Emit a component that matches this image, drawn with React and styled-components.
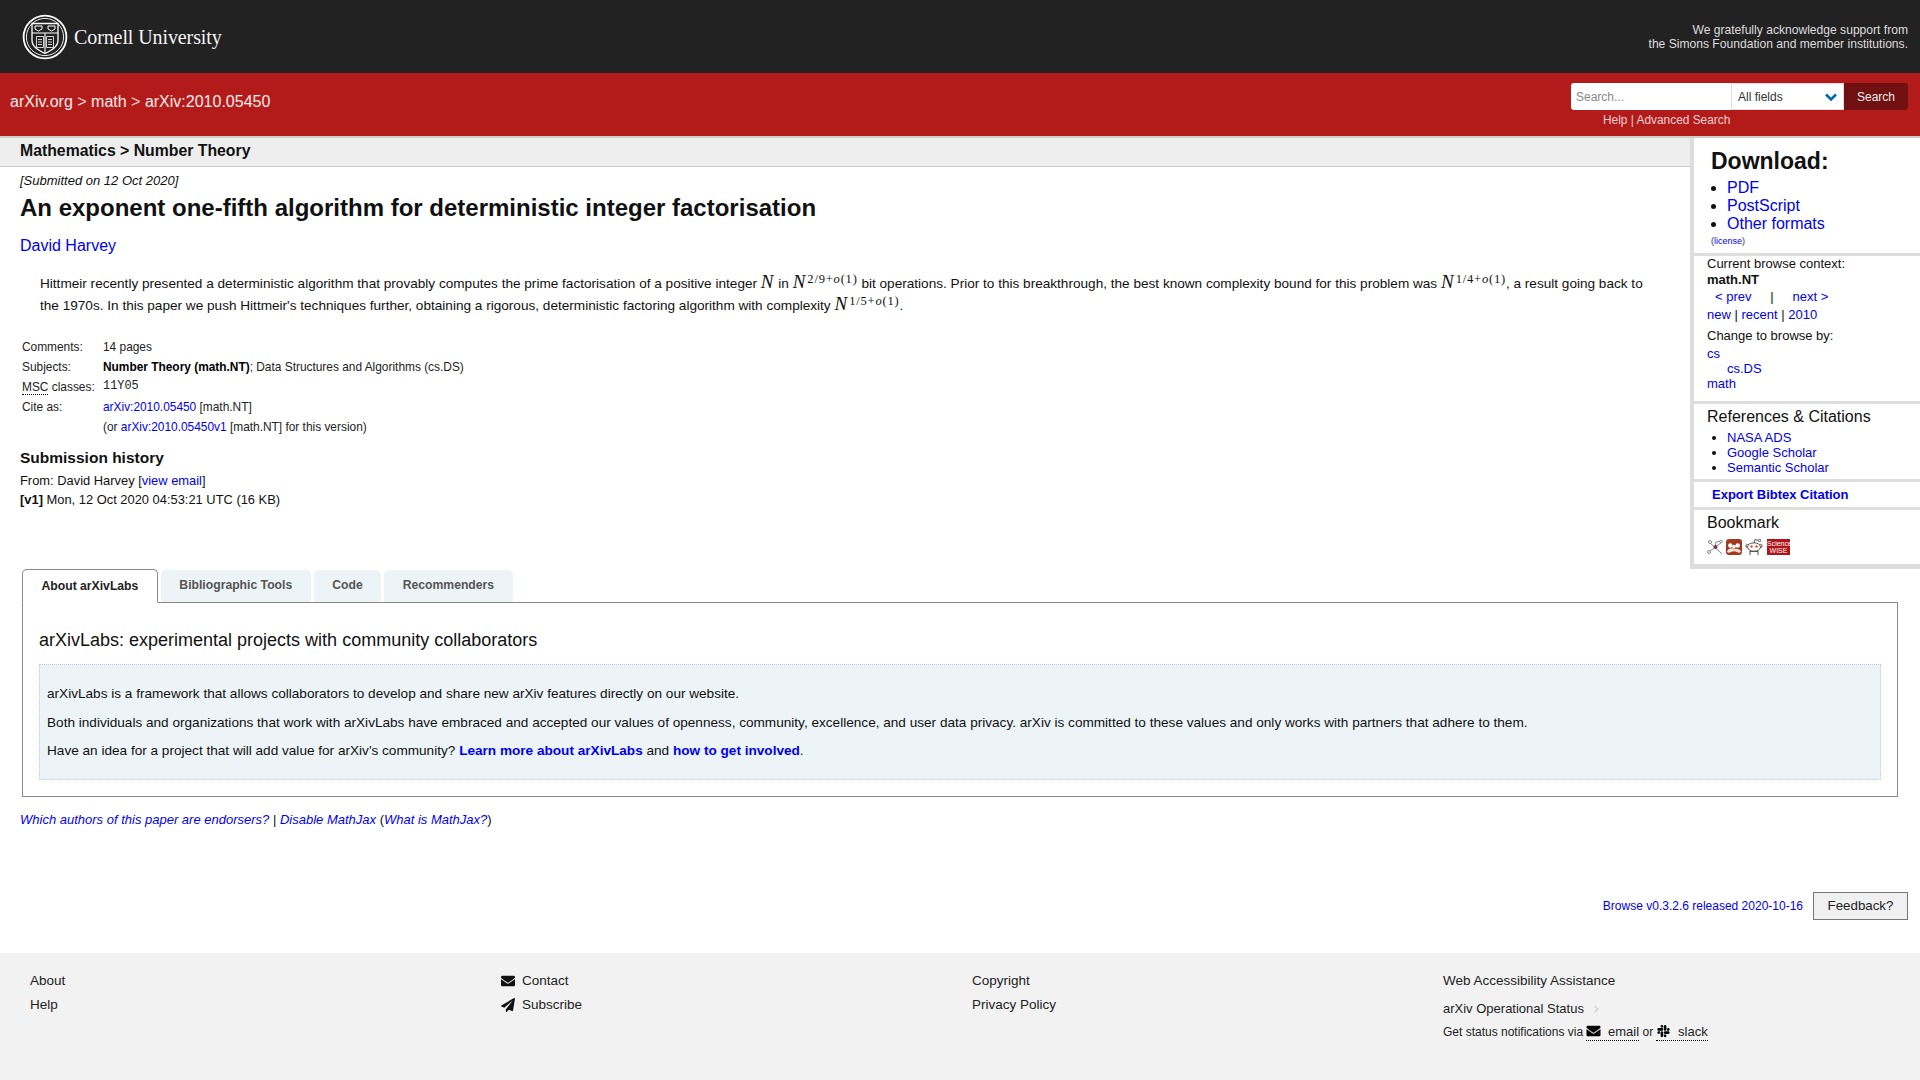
import React from "react";
import styled, { createGlobalStyle } from "styled-components";
import { FaChevronRight, FaEnvelope, FaPaperPlane, FaSlack } from "react-icons/fa";

const Global = createGlobalStyle`
  html, body { margin: 0; padding: 0; background: #fff; }
  body { font-family: "Liberation Sans", Arial, sans-serif; font-size: 13px; color: #111; }
  a { color: #0000ee; text-decoration: none; }
`;

const Logo = () => (
  <svg width="46" height="46" viewBox="0 0 46 46" fill="none" stroke="#fff">
    <circle cx="23" cy="23" r="21.4" strokeWidth="1.8" />
    <circle cx="23" cy="23" r="18.6" strokeWidth="0.9" />
    <path d="M10 9.500h26v17c0 6-6 9.500-13 13-7-3.500-13-7-13-13z" strokeWidth="1.3" />
    <path d="M10 19h26M23 19v20" strokeWidth="1.1" />
    <path d="M13 12h7v3l-3.500 2-3.500-2zM26 12h7v3l-3.500 2-3.500-2z" strokeWidth="1" />
    <path d="M14.500 22.500h7v11h-7zM24.500 22.500h7v11h-7zM16 25.500h4M16 28h4M16 30.500h4M26 25.500h4M26 28h4M26 30.500h4" strokeWidth="0.8" />
  </svg>
);

const Chevron = () => (
  <svg width="12" height="9" viewBox="0 0 12 9" fill="none" stroke="#0068ac" strokeWidth="2.600">
    <path d="M1 1.500l5 5 5-5" />
  </svg>
);

const BibIcon = () => (
  <svg width="16" height="16" viewBox="0 0 16 16" fill="none" stroke="#888" strokeWidth="1">
    <path d="M1 2l14 13M15 3L2 13" />
    <path d="M8 8l1-5 5-1" />
    <circle cx="3" cy="3" r="1.500" fill="#fff" />
    <circle cx="14" cy="2.500" r="1.300" fill="#fff" />
    <circle cx="2" cy="13" r="1.500" fill="#fff" />
    <circle cx="8.500" cy="8" r="1.500" fill="#8a2a4a" stroke="#8a2a4a" />
  </svg>
);

const MendeleyIcon = () => (
  <svg width="16" height="16" viewBox="0 0 16 16">
    <rect width="16" height="16" rx="3" fill="#a0391f" />
    <circle cx="4.300" cy="6.500" r="2.200" fill="#fff" />
    <circle cx="11.700" cy="6.500" r="2.200" fill="#fff" />
    <circle cx="8" cy="7.500" r="1.800" fill="#fff" />
    <path d="M1 13c.5-3.500 4-4 7-3.500s6.500 0 7 3.500c-2 1.500-3 .5-4 0-2-1-4-1-6 0-1 .5-2.500 1.500-4 0z" fill="#fff" opacity="0.85" />
  </svg>
);

const RedditIcon = () => (
  <svg width="18" height="18" viewBox="0 0 18 18" fill="#fff" stroke="#555" strokeWidth="1">
    <path d="M9 5l1-3.500 3.500 1" fill="none" />
    <circle cx="14.500" cy="2.500" r="1.200" />
    <circle cx="2.500" cy="8" r="1.600" />
    <circle cx="15.500" cy="8" r="1.600" />
    <ellipse cx="9" cy="9" rx="6.500" ry="4.200" />
    <path d="M5 13v4M13 13v4M5 13.500h8" fill="none" />
    <circle cx="6.500" cy="8.500" r="1.200" fill="#f04a23" stroke="none" />
    <circle cx="11.500" cy="8.500" r="1.200" fill="#f04a23" stroke="none" />
  </svg>
);

const Masthead = styled.div`
  height: 73px;
  background: #222;
  display: flex;
  align-items: center;
  justify-content: space-between;
  padding: 0 12px 0 22px;
`;
const Brand = styled.div`
  display: flex;
  align-items: center;
  gap: 6px;
  color: #f4f4f4;
  margin-top: 1px;
`;
const Wordmark = styled.span`
  font-family: "Liberation Serif", serif;
  font-size: 20px;
  letter-spacing: -0.1px;
`;
const Support = styled.div`
  color: #ddd;
  font-size: 12.100px;
  line-height: 14px;
  text-align: right;
`;
const RedBar = styled.div`
  height: 63px;
  background: #b31b1b;
  border-bottom: 2px solid #ccc;
  display: flex;
  justify-content: space-between;
  padding: 0 12px 0 10px;
`;
const Crumbs = styled.div`
  color: #f3dcdc;
  font-size: 16px;
  line-height: 18px;
  margin-top: 20px;
  a { color: #fbecec; }
`;
const SearchBlock = styled.div`
  margin-top: 10px;
`;
const SearchRow = styled.div`
  display: flex;
  height: 27px;
`;
const SearchInput = styled.div`
  width: 155px;
  padding-left: 5px;
  background: #fff;
  color: #888;
  font-size: 12px;
  line-height: 28px;
  border-radius: 3px 0 0 3px;
`;
const SearchSelect = styled.div`
  width: 113px;
  box-sizing: border-box;
  padding: 1px 6px 0;
  background: #fff;
  border: 1px solid #ddd;
  font-size: 12px;
  display: flex;
  align-items: center;
  justify-content: space-between;
  color: #333;
`;
const SearchButton = styled.div`
  width: 64px;
  background: #701010;
  color: #eee;
  font-size: 12px;
  line-height: 29px;
  text-align: center;
  border-radius: 0 3px 3px 0;
`;
const SearchLinks = styled.div`
  color: #f0d0d0;
  font-size: 11.900px;
  line-height: 14px;
  margin: 3px 0 0 32px;
`;
const Upper = styled.div`
  display: flex;
  align-items: flex-start;
`;
const Main = styled.div`
  flex: 1;
  min-width: 0;
`;
const SubHeader = styled.div`
  height: 28px;
  background: #eee;
  border-bottom: 1px solid #ccc;
  padding-left: 20px;
  font-size: 15.800px;
  font-weight: bold;
  line-height: 26px;
`;
const Content = styled.div`
  padding: 6px 20px 0;
`;
const Dateline = styled.div`
  font-size: 13px;
  font-style: italic;
  line-height: 15px;
`;
const Title = styled.h1`
  margin: 6px 0 0;
  font-size: 24px;
  line-height: 28px;
`;
const Authors = styled.div`
  font-size: 16px;
  line-height: 18px;
  margin-top: 15px;
`;
const Abstract = styled.p`
  margin: 18px 14px 0 20px;
  font-size: 13.600px;
  line-height: 22px;
`;
const MathVar = styled.span`
  font-family: "Liberation Serif", serif;
  font-style: italic;
  font-size: 19px;
  line-height: 0;
  margin-right: ${(p) => (p.$tight ? "0" : "1px")};
`;
const Sup = styled.sup`
  font-family: "Liberation Serif", serif;
  font-size: 12.500px;
  line-height: 0;
  vertical-align: 5px;
  margin-left: 2px;
  letter-spacing: 0.8px;
  i { font-style: italic; }
`;
const Meta = styled.div`
  display: grid;
  grid-template-columns: 81px 1fr;
  margin: 20px 0 0 2px;
  font-size: 11.900px;
  line-height: 20px;
  color: #222;
  b { color: #000; }
`;
const Abbr = styled.span`
  border-bottom: 1px dotted #000;
`;
const Mono = styled.span`
  font-family: "Liberation Mono", monospace;
  position: relative;
  top: -1px;
`;
const HistoryTitle = styled.h2`
  margin: 12px 0 0;
  font-size: 15.500px;
  line-height: 18px;
`;
const HistoryBody = styled.div`
  margin-top: 3.500px;
  font-size: 12.900px;
  line-height: 19px;
`;
const Sidebar = styled.aside`
  width: 230px;
  flex: none;
  box-sizing: border-box;
  border-left: 4px solid #ddd;
  border-bottom: 5px solid #ddd;
`;
const Section = styled.section`
  padding: ${(p) => p.$pad};
  border-top: ${(p) => (p.$first ? "0" : "3px solid #ddd")};
  line-height: 15px;
  font-size: 13px;
`;
const DownloadTitle = styled.h2`
  margin: 0 0 4px 17px;
  font-size: 23px;
  line-height: 27px;
`;
const SideList = styled.ul`
  margin: ${(p) => p.$margin || "0"};
  padding-left: ${(p) => p.$indent};
  font-size: ${(p) => p.$size};
  line-height: ${(p) => p.$line};
`;
const License = styled.div`
  font-size: 9px;
  line-height: 10px;
  margin: 3px 0 0 17px;
  color: #333;
`;
const SideHead = styled.div`
  font-size: 16px;
  line-height: 18px;
`;
const Gap = styled.div`
  margin-top: ${(p) => p.$top};
  padding-left: ${(p) => p.$left || "0"};
`;
const Context = styled.b`
  display: block;
  margin-top: 1px;
`;
const Spread = styled.span`
  display: inline-block;
  width: ${(p) => p.$w};
  text-align: center;
`;
const Icons = styled.div`
  display: flex;
  align-items: center;
  gap: 3px;
  margin-top: 6px;
  height: 18px;
`;
const Wise = styled.span`
  width: 23px;
  height: 16px;
  background: #b01217;
  color: #fff;
  font-size: 7px;
  line-height: 7.500px;
  text-align: center;
  margin-left: 1px;
  display: block;
  padding-top: 0.500px;
  box-sizing: border-box;
  font-family: "Liberation Sans", sans-serif;
`;
const Labs = styled.div`
  margin: 0 22px 0;
`;
const Tabs = styled.div`
  display: flex;
  gap: 3px;
  align-items: flex-end;
  margin-bottom: -1px;
  position: relative;
`;
const Tab = styled.div`
  height: ${(p) => (p.$active ? "34px" : "33px")};
  box-sizing: border-box;
  padding: ${(p) => (p.$active ? "0 18.500px" : "0 18.500px 2px")};
  font-size: 12.200px;
  font-weight: bold;
  display: flex;
  align-items: center;
  border-radius: 5px 5px 0 0;
  color: ${(p) => (p.$active ? "#222" : "#555")};
  background: ${(p) => (p.$active ? "#fff" : "#ecf4f8")};
  border: ${(p) => (p.$active ? "1px solid #888" : "0")};
  border-bottom: ${(p) => (p.$active ? "1px solid #fff" : "1px solid #888")};
`;
const Panel = styled.div`
  border: 1px solid #888;
  padding: 26px 16px 16px;
`;
const PanelTitle = styled.h3`
  margin: 0;
  font-size: 18px;
  font-weight: normal;
  line-height: 22px;
`;
const Notice = styled.div`
  margin-top: 13px;
  background: #ecf4f8;
  border: 1px dotted #bcd;
  padding: 15px 7px 15px;
  font-size: 13.600px;
  line-height: 28.700px;
  height: 116px;
  box-sizing: border-box;
  a { font-weight: bold; }
`;
const Endorse = styled.div`
  margin: 15px 20px 0;
  font-size: 13px;
  line-height: 15px;
  a { font-style: italic; }
`;
const Feedback = styled.div`
  display: flex;
  justify-content: flex-end;
  align-items: center;
  gap: 10px;
  margin: 65px 12px 0 0;
  font-size: 12px;
`;
const FeedbackButton = styled.div`
  width: 95px;
  height: 28px;
  box-sizing: border-box;
  background: #f0f0f0;
  border: 1px solid #777;
  font-size: 13.300px;
  line-height: 26px;
  text-align: center;
  color: #222;
`;
const Footer = styled.footer`
  margin-top: 33px;
  height: 127px;
  background: #f2f2f2;
  padding: 20px 0 0 30px;
  display: grid;
  grid-template-columns: repeat(4, 471px);
  font-size: 13.500px;
  line-height: 16px;
  color: #222;
`;
const FootRow = styled.div`
  display: flex;
  align-items: center;
  gap: 7px;
  margin-bottom: 8px;
  svg { width: 14px; height: 14px; color: #111; }
`;
const StatusRow = styled.div`
  margin-top: 12px;
  display: flex;
  align-items: center;
  gap: 9px;
  font-size: 13px;
  svg { width: 7px; height: 8px; color: #ccc; }
`;
const Notify = styled.div`
  margin-top: 7px;
  font-size: 12px;
`;
const Dotted = styled.span`
  border-bottom: 1px dotted #000;
  padding-bottom: 1px;
  font-size: 13px;
  svg { width: 15px; height: 14px; vertical-align: -2px; margin-right: 3px; color: #000; }
`;

export default function App() {
  return (
    <>
      <Global />
      <Masthead>
        <Brand>
          <Logo />
          <Wordmark>Cornell University</Wordmark>
        </Brand>
        <Support>
          We gratefully acknowledge support from
          <br />
          the Simons Foundation and member institutions.
        </Support>
      </Masthead>
      <RedBar>
        <Crumbs>
          <a href="#a">arXiv.org</a> &gt; <a href="#a">math</a> &gt; <a href="#a">arXiv:2010.05450</a>
        </Crumbs>
        <SearchBlock>
          <SearchRow>
            <SearchInput>Search...</SearchInput>
            <SearchSelect>
              All fields <Chevron />
            </SearchSelect>
            <SearchButton>Search</SearchButton>
          </SearchRow>
          <SearchLinks>Help | Advanced Search</SearchLinks>
        </SearchBlock>
      </RedBar>
      <Upper>
        <Main>
          <SubHeader>Mathematics &gt; Number Theory</SubHeader>
          <Content>
            <Dateline>[Submitted on 12 Oct 2020]</Dateline>
            <Title>An exponent one-fifth algorithm for deterministic integer factorisation</Title>
            <Authors>
              <a href="#a">David Harvey</a>
            </Authors>
            <Abstract>
              Hittmeir recently presented a deterministic algorithm that provably computes the prime factorisation of a
              positive integer <MathVar>N</MathVar> in <MathVar $tight>N</MathVar>
              <Sup>
                2/9+<i>o</i>(1)
              </Sup>{" "}
              bit operations. Prior to this breakthrough, the best known complexity bound for this problem was{" "}
              <MathVar $tight>N</MathVar>
              <Sup>
                1/4+<i>o</i>(1)
              </Sup>
              , a result going back to the 1970s. In this paper we push Hittmeir's techniques further, obtaining a
              rigorous, deterministic factoring algorithm with complexity <MathVar $tight>N</MathVar>
              <Sup>
                1/5+<i>o</i>(1)
              </Sup>
              .
            </Abstract>
            <Meta>
              <span>Comments:</span>
              <span>14 pages</span>
              <span>Subjects:</span>
              <span>
                <b>Number Theory (math.NT)</b>; Data Structures and Algorithms (cs.DS)
              </span>
              <span>
                <Abbr>MSC</Abbr> classes:
              </span>
              <Mono>11Y05</Mono>
              <span>Cite as:</span>
              <span>
                <a href="#a">arXiv:2010.05450</a> [math.NT]
              </span>
              <span />
              <span>
                (or <a href="#a">arXiv:2010.05450v1</a> [math.NT] for this version)
              </span>
            </Meta>
            <HistoryTitle>Submission history</HistoryTitle>
            <HistoryBody>
              From: David Harvey [<a href="#a">view email</a>]
              <br />
              <b>[v1]</b> Mon, 12 Oct 2020 04:53:21 UTC (16 KB)
            </HistoryBody>
          </Content>
        </Main>
        <Sidebar>
          <Section $first $pad="10px 0 7px">
            <DownloadTitle>Download:</DownloadTitle>
            <SideList $indent="33px" $size="16px" $line="18px">
              <li>
                <a href="#a">PDF</a>
              </li>
              <li>
                <a href="#a">PostScript</a>
              </li>
              <li>
                <a href="#a">Other formats</a>
              </li>
            </SideList>
            <License>
              (<a href="#a">license</a>)
            </License>
          </Section>
          <Section $pad="0 0 10px 13px">
            <div>Current browse context:</div>
            <Context>math.NT</Context>
            <Gap $top="1.500px" $left="8px">
              <a href="#a">&lt; prev</a>
              <Spread $w="41px">|</Spread>
              <a href="#a">next &gt;</a>
            </Gap>
            <Gap $top="3.500px">
              <a href="#a">new</a> | <a href="#a">recent</a> | <a href="#a">2010</a>
            </Gap>
            <Gap $top="6px">Change to browse by:</Gap>
            <Gap $top="3px">
              <a href="#a">cs</a>
            </Gap>
            <Gap $left="20px">
              <a href="#a">cs.DS</a>
            </Gap>
            <a href="#a">math</a>
          </Section>
          <Section $pad="4px 0 4px 13px">
            <SideHead>References &amp; Citations</SideHead>
            <SideList $indent="20px" $size="13px" $line="15px" $margin="4px 0 0">
              <li>
                <a href="#a">NASA ADS</a>
              </li>
              <li>
                <a href="#a">Google Scholar</a>
              </li>
              <li>
                <a href="#a">Semantic Scholar</a>
              </li>
            </SideList>
          </Section>
          <Section $pad="5px 0 5px 18px">
            <a href="#a">
              <b>Export Bibtex Citation</b>
            </a>
          </Section>
          <Section $pad="4px 0 8px 13px">
            <SideHead>Bookmark</SideHead>
            <Icons>
              <BibIcon />
              <MendeleyIcon />
              <RedditIcon />
              <Wise>
                Science
                <br />
                WISE
              </Wise>
            </Icons>
          </Section>
        </Sidebar>
      </Upper>
      <Labs>
        <Tabs>
          <Tab $active>About arXivLabs</Tab>
          <Tab>Bibliographic Tools</Tab>
          <Tab>Code</Tab>
          <Tab>Recommenders</Tab>
        </Tabs>
        <Panel>
          <PanelTitle>arXivLabs: experimental projects with community collaborators</PanelTitle>
          <Notice>
            <div>arXivLabs is a framework that allows collaborators to develop and share new arXiv features directly on our website.</div>
            <div>
              Both individuals and organizations that work with arXivLabs have embraced and accepted our values of openness, community,
              excellence, and user data privacy. arXiv is committed to these values and only works with partners that adhere to them.
            </div>
            <div>
              Have an idea for a project that will add value for arXiv's community? <a href="#a">Learn more about arXivLabs</a> and{" "}
              <a href="#a">how to get involved</a>.
            </div>
          </Notice>
        </Panel>
      </Labs>
      <Endorse>
        <a href="#a">Which authors of this paper are endorsers?</a> | <a href="#a">Disable MathJax</a> (<a href="#a">What is MathJax?</a>)
      </Endorse>
      <Feedback>
        <a href="#a">Browse v0.3.2.6 released 2020-10-16</a>
        <FeedbackButton>Feedback?</FeedbackButton>
      </Feedback>
      <Footer>
        <div>
          <FootRow>About</FootRow>
          <FootRow>Help</FootRow>
        </div>
        <div>
          <FootRow>
            <FaEnvelope /> Contact
          </FootRow>
          <FootRow>
            <FaPaperPlane /> Subscribe
          </FootRow>
        </div>
        <div>
          <FootRow>Copyright</FootRow>
          <FootRow>Privacy Policy</FootRow>
        </div>
        <div>
          <div>Web Accessibility Assistance</div>
          <StatusRow>
            arXiv Operational Status <FaChevronRight />
          </StatusRow>
          <Notify>
            Get status notifications via{" "}
            <Dotted>
              <FaEnvelope /> email
            </Dotted>{" "}
            or{" "}
            <Dotted>
              <FaSlack /> slack
            </Dotted>
          </Notify>
        </div>
      </Footer>
    </>
  );
}
